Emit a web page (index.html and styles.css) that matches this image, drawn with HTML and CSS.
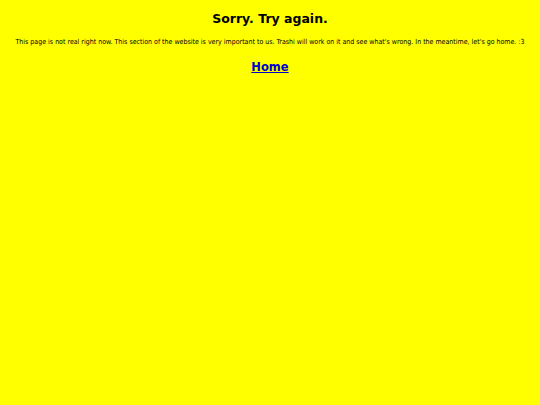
FILE: index.html
```html
<!DOCTYPE html>
<html>
<head>
<meta charset="utf-8">
<link rel="stylesheet" href="styles.css">
</head>
<body>
<main class="page">
<h1 class="title">Sorry. Try again.</h1>
<p class="msg">This page is not real right now. This section of the website is very important to us. Trashi will work on it and see what's wrong. In the meantime, let's go home. :3</p>
<a class="home" href="#">Home</a>
</main>
</body>
</html>
```
FILE: styles.css
```css
html, body {
  margin: 0;
  padding: 0;
  background: #ffff00;
  height: 100%;
}
.page {
  display: flex;
  flex-direction: column;
  align-items: center;
  text-align: center;
  font-family: "DejaVu Sans", sans-serif;
  color: #000;
  padding-top: 11px;
}
.title {
  margin: 0;
  font-size: 12.5px;
  font-weight: bold;
  line-height: 16px;
}
.msg {
  margin: 10px 0 0;
  font-family: "DejaVu Sans Condensed", "DejaVu Sans", sans-serif;
  font-size: 7px;
  line-height: 10px;
  white-space: nowrap;
}
.home {
  margin-top: 13px;
  font-size: 11.5px;
  font-weight: bold;
  line-height: 14px;
  color: #0000cc;
  text-decoration: underline;
}
```
